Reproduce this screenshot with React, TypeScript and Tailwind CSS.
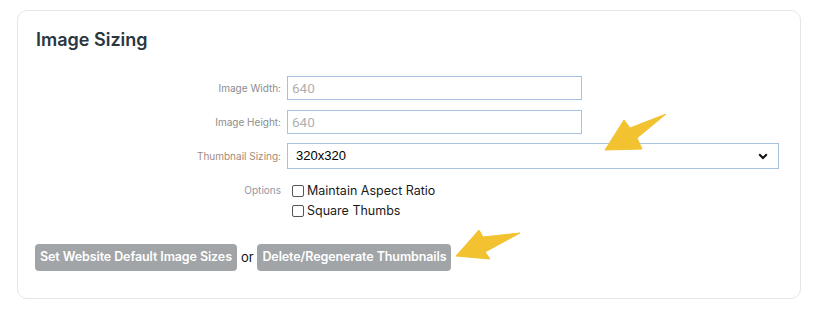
import React from 'react';

const ui = { fontFamily: 'Inter, "Noto Sans", sans-serif' };
const field = { fontFamily: 'Roboto, "Liberation Sans", sans-serif' };

const Arrow = ({ points }: { points: string }) => (
  <polygon points={points} fill="#f2c230" stroke="#f2c230" strokeWidth="1" strokeLinejoin="round" />
);

function Row({ label, children, tone = 'text-[#8c8c8c]' }: { label: string; children: React.ReactNode; tone?: string }) {
  return (
    <div className="flex items-center">
      <div className={`w-[263px] text-right text-[10px] leading-[14px] ${tone}`}>{label}</div>
      <div className="ml-[6px]">{children}</div>
    </div>
  );
}

export default function App() {
  return (
    <div className="w-[824px] h-[323px] bg-white pt-[10px] pl-[17px]" style={ui}>
      <div className="relative w-[784px] h-[289px] border border-[#e6e6e6] rounded-[10px]">
        <h2 className="pl-[18px] pt-[17px] text-[18px] leading-[24px] font-semibold text-[#2a3640]">Image Sizing</h2>

        <div className="mt-[24px] flex flex-col">
          <Row label="Image Width:">
            <div className="w-[295px] h-[24px] border border-[#aac1dd] flex items-center pl-[4px] text-[13.5px] text-[#b0b0b0]" style={field}>640</div>
          </Row>
          <div className="h-[10px]" />
          <Row label="Image Height:">
            <div className="w-[295px] h-[24px] border border-[#aac1dd] flex items-center pl-[4px] text-[13.5px] text-[#b0b0b0]" style={field}>640</div>
          </Row>
          <div className="h-[9px]" />
          <Row label="Thumbnail Sizing:" tone="text-[#a48a78]">
            <div className="w-[492px] h-[26px] border border-[#aac1dd] flex items-center justify-between pl-[8px] pr-[10px] text-[13px] text-black" style={{ fontFamily: '"Liberation Sans", Arial, sans-serif' }}>
              <span>320x320</span>
              <svg width="10" height="7" viewBox="0 0 10 7">
                <path d="M1.2 1.2 L5 5 L8.8 1.2" fill="none" stroke="#111" strokeWidth="2" />
              </svg>
            </div>
          </Row>

          <div className="mt-[13px] flex">
            <div className="w-[263px] text-right text-[10px] leading-[14px] text-[#8f98a3] pt-[1px]">Options</div>
            <div className="ml-[11px] flex flex-col gap-[3px] text-[12.5px] leading-[17px] text-[#1a1a1a]">
              <label className="flex items-center gap-[3px]">
                <span className="w-[12px] h-[12px] border border-[#555] rounded-[2px] bg-white" />
                Maintain Aspect Ratio
              </label>
              <label className="flex items-center gap-[3px]">
                <span className="w-[12px] h-[12px] border border-[#555] rounded-[2px] bg-white" />
                Square Thumbs
              </label>
            </div>
          </div>
        </div>

        <div className="mt-[25px] pl-[17px] flex items-center text-[12.5px] tracking-[-0.1px]">
          <button className="h-[27px] px-[5px] rounded-[4px] bg-[#a1a5a8] text-white font-semibold">Set Website Default Image Sizes</button>
          <span className="mx-[4px] text-[13px] text-[#111]">or</span>
          <button className="h-[27px] px-[5px] rounded-[4px] bg-[#a1a5a8] text-white font-semibold">Delete/Regenerate Thumbnails</button>
        </div>

        <svg className="absolute left-[-17px] top-[-10px] pointer-events-none" width="824" height="323">
          <Arrow points="604,149 623,119 629,127 665,113 636,137 641,148" />
          <Arrow points="455,255 478,229 482,236 519,232 484,251 489,258" />
        </svg>
      </div>
    </div>
  );
}
